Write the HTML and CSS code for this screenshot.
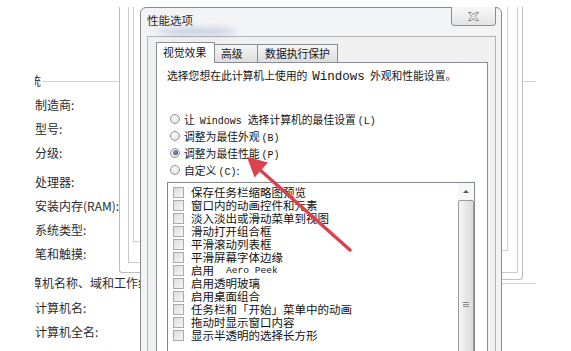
FILE: index.html
```html
<!DOCTYPE html>
<html lang="zh-CN">
<head>
  <meta charset="UTF-8" />
  <title>性能选项</title>
  <link rel="stylesheet" href="styles.css">
</head>
<body>
<div class="screen">

  <div class="sysinfo">
    <div class="sec-title"><span class="sec-name cut-sys">系统</span><span class="rule"></span></div>
    <div class="group first">
      <div class="label">制造商:</div>
      <div class="label">型号:</div>
      <div class="label">分级:</div>
    </div>
    <div class="group second">
      <div class="label">处理器:</div>
      <div class="label">安装内存(RAM):</div>
      <div class="label">系统类型:</div>
      <div class="label">笔和触摸:</div>
    </div>
    <div class="sec-title lower"><span class="sec-name cut-comp">计算机名称、域和工作组设置</span><span class="rule"></span></div>
    <div class="group third">
      <div class="label">计算机名:</div>
      <div class="label">计算机全名:</div>
    </div>
  </div>

  <div class="bg-left">
    <div class="bg-left-in">
      <div class="bg-left-in2"></div>
    </div>
  </div>
  <div class="bg-right">
    <div class="bg-right-in">
      <div class="bg-right-in2"></div>
    </div>
  </div>

  <div class="dialog">
    <div class="titlebar">
      <div class="title">性能选项</div>
      <div class="glass"></div>
      <div class="close">
        <svg width="11" height="9" viewBox="0 0 11 9">
          <polygon points="0.5,0.5 3.5,0.5 5.5,3 7.5,0.5 10.5,0.5 7,4.5 10.5,8.5 7.5,8.5 5.5,6 3.5,8.5 0.5,8.5 4,4.5" fill="#f6f6f6" stroke="#8a8a8a" stroke-width="1" stroke-linejoin="round"/>
        </svg>
      </div>
    </div>

    <div class="client">
      <div class="tabs">
        <div class="tab active">视觉效果</div>
        <div class="tab wide">高级</div>
        <div class="tab">数据执行保护</div>
      </div>

      <div class="panel">
        <div class="intro">选择您想在此计算机上使用的<span class="lat big">Windows</span>外观和性能设置。</div>

        <div class="radios">
          <div class="radio-row"><span class="radio"></span><span>让<span class="lat win">Windows</span>选择计算机的最佳设置<span class="lat key">(L)</span></span></div>
          <div class="radio-row"><span class="radio"></span><span>调整为最佳外观<span class="lat key">(B)</span></span></div>
          <div class="radio-row"><span class="radio on"></span><span>调整为最佳性能<span class="lat key">(P)</span></span></div>
          <div class="radio-row"><span class="radio"></span><span>自定义<span class="lat key">(C)</span>:</span></div>
        </div>

        <div class="listbox">
          <div class="check-row"><span class="box"></span>保存任务栏缩略图预览</div>
          <div class="check-row"><span class="box"></span>窗口内的动画控件和元素</div>
          <div class="check-row"><span class="box"></span>淡入淡出或滑动菜单到视图</div>
          <div class="check-row"><span class="box"></span>滑动打开组合框</div>
          <div class="check-row"><span class="box"></span>平滑滚动列表框</div>
          <div class="check-row"><span class="box"></span>平滑屏幕字体边缘</div>
          <div class="check-row"><span class="box"></span>启用<span class="lat aero">Aero Peek</span></div>
          <div class="check-row"><span class="box"></span>启用透明玻璃</div>
          <div class="check-row"><span class="box"></span>启用桌面组合</div>
          <div class="check-row"><span class="box"></span>任务栏和「开始」菜单中的动画</div>
          <div class="check-row"><span class="box"></span>拖动时显示窗口内容</div>
          <div class="check-row"><span class="box"></span>显示半透明的选择长方形</div>

          <div class="scrollbar">
            <div class="sb-up"><span class="sb-arrow"></span></div>
            <div class="sb-thumb">
              <div class="grip"><i></i><i></i><i></i></div>
            </div>
          </div>
        </div>
      </div>
    </div>
  </div>

  <svg class="arrow" width="571" height="351" viewBox="0 0 571 351">
    <line x1="350" y1="250" x2="259" y2="169" stroke="#d9434e" stroke-width="3.5" stroke-linecap="round"/>
    <polygon points="247,157 268,162.5 254.5,177.5" fill="#d9434e"/>
  </svg>

</div>
</body>
</html>
```

FILE: styles.css
```css
html, body {
  margin: 0;
  overflow: hidden;
  background: #fff;
}
body {
  font-family: "Noto Sans CJK SC", sans-serif;
}
.screen {
  position: relative;
  width: 571px;
  height: 351px;
  overflow: hidden;
}

/* system page behind the dialog */
.sysinfo {
  width: 501px;
  margin-left: 35px;
  padding-top: 68px;
  overflow: hidden;
  font-size: 12px;
  color: #2b2b2b;
}
.sec-title {
  display: flex;
  align-items: center;
  height: 24px;
}
.sec-title.lower {
  margin-top: 4px;
}
.sec-name {
  white-space: nowrap;
}
.cut-sys {
  margin-left: -18px;
}
.cut-comp {
  margin-left: -17px;
}
.rule {
  flex: 1;
  margin: 3px 0 0 2px;
  border-top: 1px solid #d2d2d2;
}
.group.first {
  margin-top: 1px;
}
.group.second {
  margin-top: 5px;
}
.group.third {
  margin-top: 2px;
}
.label {
  height: 24px;
  line-height: 24px;
  white-space: nowrap;
}

/* edges of the window underneath */
.bg-left {
  position: absolute;
  left: 119px;
  top: 7px;
  width: 22px;
  height: 266px;
  box-sizing: border-box;
  background: #fff;
  border-left: 1px solid #bcbcbc;
  border-bottom: 1px solid #bcbcbc;
  border-radius: 0 0 0 3px;
}
.bg-left-in {
  margin-left: 8px;
  height: 255px;
  border-left: 1px solid #c9c9c9;
  border-bottom: 1px solid #c9c9c9;
}
.bg-left-in2 {
  margin-left: 4px;
  height: 234px;
  border-left: 1px solid #d0d0d0;
  border-bottom: 1px solid #d0d0d0;
}
.bg-right {
  position: absolute;
  left: 501px;
  top: 7px;
  width: 22px;
  height: 273px;
  box-sizing: border-box;
  background: #fff;
  border-right: 1px solid #bcbcbc;
  border-bottom: 1px solid #bcbcbc;
  border-radius: 0 0 4px 0;
}
.bg-right-in {
  width: 16px;
  height: 265px;
  border-right: 1px solid #c9c9c9;
  border-bottom: 1px solid #c9c9c9;
}
.bg-right-in2 {
  width: 6px;
  height: 243px;
  border-right: 1px solid #d0d0d0;
  border-bottom: 1px solid #d0d0d0;
}

/* performance options dialog */
.dialog {
  position: absolute;
  left: 140px;
  top: 7px;
  width: 362px;
  height: 420px;
  box-sizing: border-box;
  padding: 0 5px 0 6px;
  background: #f2f3f5;
  border: 1px solid #8c8c8c;
  border-radius: 6px 6px 0 0;
  color: #151515;
}
.titlebar {
  position: relative;
  height: 28px;
}
.title {
  padding-top: 5px;
  line-height: 14px;
  font-size: 11.5px;
  color: #2a2a2a;
}
.glass {
  position: absolute;
  left: 10px;
  top: 20px;
  width: 80px;
  height: 7px;
  border-radius: 50%;
  background: rgba(120, 150, 190, 0.4);
  filter: blur(3px);
}
.close {
  position: absolute;
  top: -1px;
  right: 0;
  width: 45px;
  height: 19px;
  box-sizing: border-box;
  display: flex;
  align-items: center;
  justify-content: center;
  border: 1px solid #8e8e8e;
  border-top: none;
  border-radius: 0 0 4px 4px;
  background: linear-gradient(#f8f8f8, #e3e3e3);
}

.client {
  height: 420px;
  padding: 5px 7px 0 8px;
  background: #f0f0f0;
  border: 1px solid #b3b3b3;
  font-size: 10.8px;
}
.tabs {
  position: relative;
  z-index: 1;
  display: flex;
  align-items: flex-end;
  height: 21px;
}
.tab {
  height: 18px;
  line-height: 17px;
  margin-bottom: 1px;
  padding: 0 6px;
  box-sizing: border-box;
  border: 1px solid #898c95;
  border-bottom: none;
  border-left: none;
  background: linear-gradient(#f4f4f4, #dedede);
  white-space: nowrap;
}
.tab.active {
  height: 21px;
  line-height: 19px;
  margin-bottom: 0;
  width: 59px;
  border-left: 1px solid #898c95;
  background: #fff;
}
.tab.wide {
  width: 43px;
}
.tab:last-child {
  width: 80px;
  text-align: center;
}
.panel {
  margin-top: -1px;
  height: 420px;
  padding: 6px 0 0 10px;
  background: #fff;
  border: 1px solid #898c95;
}
.intro {
  line-height: 13px;
  white-space: nowrap;
}
.lat {
  font-family: "Liberation Mono", monospace;
}
.lat.big {
  font-size: 12.5px;
  margin: 0 5px;
}
.lat.win {
  font-size: 10px;
  margin: 0 6px 0 5px;
}
.lat.key {
  font-size: 10px;
  margin-left: 2px;
}
.lat.aero {
  font-size: 9.6px;
  margin-left: 5px;
}

.radios {
  margin-top: 26px;
}
.radio-row {
  display: flex;
  align-items: center;
  gap: 4px;
  height: 17px;
  padding-left: 3px;
  white-space: nowrap;
}
.radio {
  width: 10px;
  height: 10px;
  box-sizing: border-box;
  border-radius: 50%;
  border: 1px solid #939393;
  background: radial-gradient(circle at 40% 35%, #fdfdfd, #d9d9d9);
  display: flex;
  align-items: center;
  justify-content: center;
}
.radio.on::after {
  content: "";
  width: 5px;
  height: 5px;
  border-radius: 50%;
  background: radial-gradient(circle at 40% 35%, #7c9bb8, #2c4a68);
}

.listbox {
  position: relative;
  margin-top: 4px;
  width: 308px;
  height: 230px;
  box-sizing: border-box;
  padding: 3px 0 0 5px;
  border: 1px solid #828790;
  font-size: 11.5px;
  color: #111;
}
.check-row {
  display: flex;
  align-items: center;
  gap: 7px;
  height: 13px;
  line-height: 13px;
  white-space: nowrap;
}
.box {
  width: 11px;
  height: 11px;
  flex: none;
  box-sizing: border-box;
  border: 1px solid #ababab;
  background: linear-gradient(135deg, #dcdcdc, #f7f7f7);
}
.scrollbar {
  position: absolute;
  top: 0;
  right: 0;
  bottom: 0;
  width: 16px;
  background: #f7f7f7;
}
.sb-up {
  height: 17px;
  display: flex;
  align-items: center;
  justify-content: center;
}
.sb-arrow {
  width: 0;
  height: 0;
  border-left: 3px solid transparent;
  border-right: 3px solid transparent;
  border-bottom: 3px solid #555;
}
.sb-thumb {
  position: absolute;
  top: 17px;
  left: 0;
  right: 0;
  height: 208px;
  box-sizing: border-box;
  border: 1px solid #9a9a9a;
  border-radius: 2px;
  background: linear-gradient(to right, #f6f6f6, #dadada);
}
.grip {
  position: absolute;
  top: 101px;
  left: 4px;
  width: 6px;
}
.grip i {
  display: block;
  height: 1px;
  margin-bottom: 1px;
  background: #8a8a8a;
}

.arrow {
  position: absolute;
  left: 0;
  top: 0;
  z-index: 10;
}
```
